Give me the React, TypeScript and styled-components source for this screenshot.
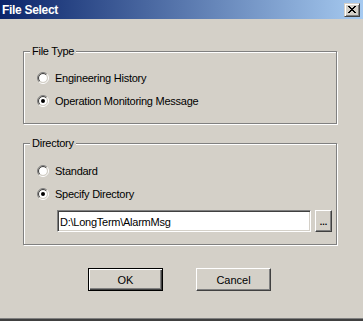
import React, { useState } from 'react';
import styled, { createGlobalStyle } from 'styled-components';

const GlobalStyle = createGlobalStyle`
  html, body {
    margin: 0;
    padding: 0;
    background: #d4d0c8;
  }
  * {
    box-sizing: border-box;
  }
`;

const Window = styled.div`
  width: 363px;
  height: 321px;
  background: #d4d0c8;
  display: flex;
  flex-direction: column;
  border-bottom: 2px solid #404040;
  box-shadow: inset 0 -1px 0 #808080;
  font-family: "Liberation Sans", Arial, sans-serif;
  font-size: 11px;
  letter-spacing: -0.25px;
  color: #000;
`;

const TitleBar = styled.div`
  height: 19px;
  flex-shrink: 0;
  display: flex;
  align-items: center;
  justify-content: space-between;
  padding: 0 3px 0 2px;
  background: linear-gradient(to right, #0a246a, #a6caf0);
`;

const Title = styled.span`
  color: #fff;
  font-weight: bold;
  font-size: 12px;
  letter-spacing: -0.3px;
`;

const CloseButton = styled.button`
  width: 16px;
  height: 14px;
  padding: 0;
  margin: 0;
  display: flex;
  align-items: center;
  justify-content: center;
  background: #d4d0c8;
  border: 1px solid;
  border-color: #d4d0c8 #404040 #404040 #d4d0c8;
  box-shadow: inset 1px 1px #fff, inset -1px -1px #808080;
`;

const Body = styled.div`
  flex: 1;
  display: flex;
  flex-direction: column;
  padding: 32px 26px 0 23px;
`;

// etched group box: dark line with a white line beside it
const Group = styled.section<{ $gap?: number }>`
  margin-top: ${({ $gap }) => $gap ?? 0}px;
  border: 1px solid #808080;
  box-shadow: 1px 1px 0 #fff, inset 1px 1px 0 #fff;
`;

const Caption = styled.div`
  width: fit-content;
  margin: -7px 0 0 6px;
  padding: 0 2px;
  line-height: 13px;
  background: #d4d0c8;
`;

const GroupContent = styled.div<{ $top: number; $bottom: number }>`
  display: flex;
  flex-direction: column;
  gap: 7px;
  padding: ${({ $top, $bottom }) => `${$top}px 0 ${$bottom}px 13px`};
`;

const RadioRow = styled.label`
  height: 16px;
  display: flex;
  align-items: center;
  gap: 6px;
  cursor: default;
`;

const PathRow = styled.div`
  display: flex;
  gap: 4px;
  margin: 1px 0 0 20px;
`;

const PathInput = styled.input`
  width: 254px;
  height: 22px;
  margin: 0;
  padding: 1px 2px 0;
  font-family: inherit;
  font-size: 11px;
  letter-spacing: -0.25px;
  background: #fff;
  border: 1px solid;
  border-color: #808080 #fff #fff #808080;
  box-shadow: inset 1px 1px #404040, inset -1px -1px #d4d0c8;
  outline: none;
`;

const BrowseButton = styled.button`
  width: 17px;
  height: 22px;
  padding: 0 0 4px;
  margin: 0;
  font-family: inherit;
  font-size: 9px;
  font-weight: bold;
  letter-spacing: 0;
  line-height: 1;
  display: flex;
  align-items: flex-end;
  justify-content: center;
  background: #d4d0c8;
  border: 1px solid;
  border-color: #fff #404040 #404040 #fff;
  box-shadow: inset -1px -1px #808080;
`;

const Actions = styled.div`
  display: flex;
  justify-content: center;
  gap: 33px;
  margin-top: 23px;
  padding-right: 1px;
`;

const Button = styled.button<{ $default?: boolean }>`
  width: 75px;
  height: 23px;
  margin: 0;
  padding: 0;
  font-family: inherit;
  font-size: 11px;
  color: #000;
  background: #d4d0c8;
  border: 1px solid;
  border-color: ${({ $default }) =>
    $default ? '#000' : '#fff #404040 #404040 #fff'};
  box-shadow: ${({ $default }) =>
    $default
      ? 'inset 1px 1px #fff, inset -1px -1px #404040, inset -2px -2px #808080'
      : 'inset -1px -1px #808080'};
`;

const CloseGlyph = () => (
  <svg width="8" height="7" viewBox="0 0 8 7" shapeRendering="crispEdges">
    <rect x="0" y="0" width="2" height="1" fill="#000" />
    <rect x="6" y="0" width="2" height="1" fill="#000" />
    <rect x="1" y="1" width="2" height="1" fill="#000" />
    <rect x="5" y="1" width="2" height="1" fill="#000" />
    <rect x="2" y="2" width="4" height="1" fill="#000" />
    <rect x="3" y="3" width="2" height="1" fill="#000" />
    <rect x="2" y="4" width="4" height="1" fill="#000" />
    <rect x="1" y="5" width="2" height="1" fill="#000" />
    <rect x="5" y="5" width="2" height="1" fill="#000" />
    <rect x="0" y="6" width="2" height="1" fill="#000" />
    <rect x="6" y="6" width="2" height="1" fill="#000" />
  </svg>
);

// classic sunken radio circle
const RadioMark: React.FC<{ checked: boolean }> = ({ checked }) => {
  const arc = (r: number, upper: boolean) => {
    const k = r * Math.SQRT1_2;
    const a = `${6 - k} ${6 + k}`;
    const b = `${6 + k} ${6 - k}`;
    return upper ? `M${a} A${r} ${r} 0 0 1 ${b}` : `M${b} A${r} ${r} 0 0 1 ${a}`;
  };
  return (
    <svg width="12" height="12" viewBox="0 0 12 12">
      <circle cx="6" cy="6" r="4" fill="#fff" />
      <path d={arc(5.5, true)} stroke="#808080" fill="none" />
      <path d={arc(5.5, false)} stroke="#fff" fill="none" />
      <path d={arc(4.5, true)} stroke="#404040" fill="none" />
      <path d={arc(4.5, false)} stroke="#d4d0c8" fill="none" />
      {checked && <circle cx="6" cy="6" r="2" fill="#000" />}
    </svg>
  );
};

interface RadioProps {
  label: string;
  checked: boolean;
  onSelect: () => void;
}

const Radio: React.FC<RadioProps> = ({ label, checked, onSelect }) => (
  <RadioRow onClick={onSelect}>
    <RadioMark checked={checked} />
    <span>{label}</span>
  </RadioRow>
);

export default function App() {
  const [fileType, setFileType] = useState<'history' | 'message'>('message');
  const [dirMode, setDirMode] = useState<'standard' | 'specify'>('specify');
  const [path, setPath] = useState('D:\\LongTerm\\AlarmMsg');

  return (
    <>
      <GlobalStyle />
      <Window>
        <TitleBar>
          <Title>File Select</Title>
          <CloseButton>
            <CloseGlyph />
          </CloseButton>
        </TitleBar>

        <Body>
          <Group>
            <Caption>File Type</Caption>
            <GroupContent $top={12} $bottom={14}>
              <Radio
                label="Engineering History"
                checked={fileType === 'history'}
                onSelect={() => setFileType('history')}
              />
              <Radio
                label="Operation Monitoring Message"
                checked={fileType === 'message'}
                onSelect={() => setFileType('message')}
              />
            </GroupContent>
          </Group>

          <Group $gap={19}>
            <Caption>Directory</Caption>
            <GroupContent $top={13} $bottom={12}>
              <Radio
                label="Standard"
                checked={dirMode === 'standard'}
                onSelect={() => setDirMode('standard')}
              />
              <Radio
                label="Specify Directory"
                checked={dirMode === 'specify'}
                onSelect={() => setDirMode('specify')}
              />
              <PathRow>
                <PathInput value={path} onChange={(e) => setPath(e.target.value)} />
                <BrowseButton>...</BrowseButton>
              </PathRow>
            </GroupContent>
          </Group>

          <Actions>
            <Button $default>OK</Button>
            <Button>Cancel</Button>
          </Actions>
        </Body>
      </Window>
    </>
  );
}
